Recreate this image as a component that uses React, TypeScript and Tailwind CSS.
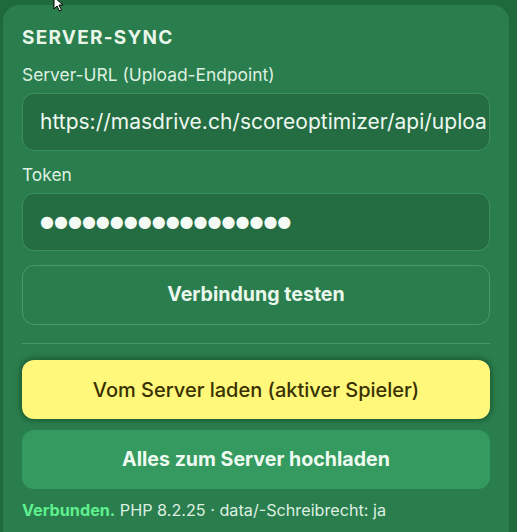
import React from "react";

export default function App() {
  const font = { fontFamily: "Inter, 'Noto Sans', sans-serif" };
  return (
    <div className="relative w-[517px] h-[532px] overflow-hidden bg-[#1e6a3c]" style={font}>
      <div className="absolute left-[3px] top-[5px] w-[506px] h-[560px] rounded-[16px] bg-[#2a7d4c]" />
      <div className="relative ml-[3px] mt-[5px] w-[506px] px-[19px] pt-[22px] flex flex-col">
        <div className="text-[19px] leading-[22px] font-bold tracking-[0.065em] text-[#e8f6ea]">SERVER-SYNC</div>
        <div className="mt-[16px] text-[17.4px] leading-[20px] text-[#def0e2]">Server-URL (Upload-Endpoint)</div>
        <div className="mt-[8px] h-[58px] rounded-[12px] border border-[#3e8f60] bg-[#246c42] flex items-center pl-[17px] pr-[2px] overflow-hidden">
          <span className="whitespace-nowrap text-[21px] text-[#eef8f0]">https://masdrive.ch/scoreoptimizer/api/uploa</span>
        </div>
        <div className="mt-[14px] text-[17.4px] leading-[20px] text-[#def0e2]">Token</div>
        <div className="mt-[8px] h-[58px] rounded-[12px] border border-[#3e8f60] bg-[#246c42] flex items-center pl-[17px] overflow-hidden">
          <span className="whitespace-nowrap text-[16px] text-[#f4fbf5]" style={{ fontFamily: "'DejaVu Sans', sans-serif" }}>
            ●●●●●●●●●●●●●●●●●●
          </span>
        </div>
        <div className="mt-[14px] h-[60px] rounded-[12px] border border-[#4a9a6c] flex items-center justify-center text-[19.6px] font-bold text-[#e9f7ec]">
          Verbindung testen
        </div>
        <div className="mt-[18px] h-px bg-[#4a9569]" />
        <div className="mt-[16px] h-[59px] rounded-[12px] bg-[#fff87a] shadow-[0_0_5px_2px_rgba(20,70,40,0.6)] flex items-center justify-center text-[20px] font-medium text-[#3a3100]">
          Vom Server laden (aktiver Spieler)
        </div>
        <div className="mt-[11px] h-[59px] rounded-[12px] bg-[#349a5f] flex items-center justify-center text-[19.6px] font-bold text-[#eefaf1]">
          Alles zum Server hochladen
        </div>
        <div className="mt-[11px] text-[16.2px] leading-[20px] text-[#def0e2]">
          <span className="font-bold text-[#5ff08f]">Verbunden.</span> PHP 8.2.25 · data/-Schreibrecht: ja
        </div>
      </div>
      <svg className="absolute left-[52px] top-[-4px]" width="16" height="16" viewBox="0 0 16 16">
        <path d="M2 1 L2 13 L5 10 L7.5 15 L9.5 14 L7 9 L11 9 Z" fill="#fff" stroke="#000" strokeWidth="1" />
      </svg>
    </div>
  );
}
